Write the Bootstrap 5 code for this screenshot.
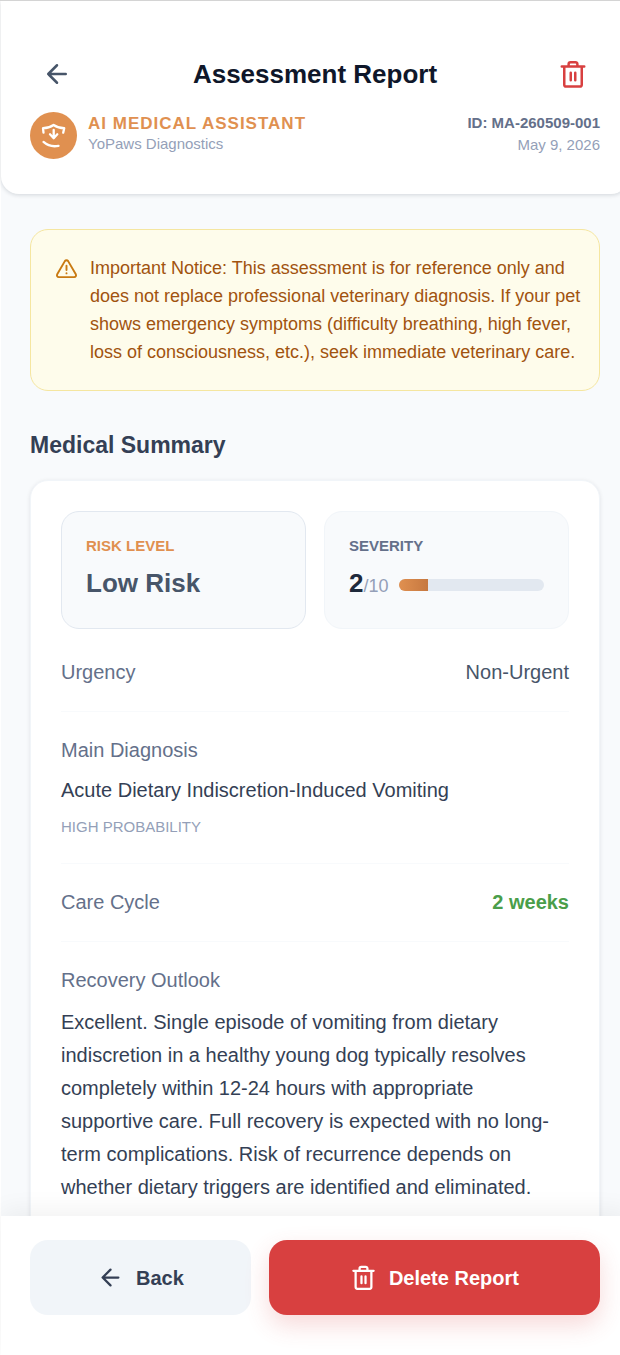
<!DOCTYPE html>
<html lang="en">
<head>
<meta charset="utf-8">
<meta name="viewport" content="width=device-width, initial-scale=1">
<title>Assessment Report</title>
<link href="https://cdn.jsdelivr.net/npm/bootstrap@5.3.0/dist/css/bootstrap.min.css" rel="stylesheet">
<style>
  body { font-family: "Liberation Sans", Arial, sans-serif; background: #fff; color: #343f55; border-top: 1px solid #d4d4d4; overflow: hidden; }
  /* the app frame runs slightly past the right edge of the window */
  .app-frame { margin-left: 1px; margin-right: -9px; background: #f8fafc; }
  .gutter { padding-left: 29px; padding-right: 29px; }
  .app-header { border-radius: 0 0 18px 18px; padding-top: 46px; padding-bottom: 35px; box-shadow: 0 1px 4px rgba(15, 23, 42, .16); z-index: 1; }
  .icon-btn { width: 54px; height: 54px; border: 0; background: none; padding: 0; display: grid; place-items: center; }
  .stroke-icon { fill: none; stroke: currentColor; stroke-width: 2; stroke-linecap: round; stroke-linejoin: round; flex: none; }
  .page-title { font-size: 26px; line-height: 32px; color: #0f172a; }
  .brand-row { margin-top: 11px; }
  .brand-logo { width: 47px; height: 47px; flex: none; }
  .brand-text { margin-left: 11px; padding-top: 2px; }
  .brand-name { font-size: 17px; line-height: 20px; letter-spacing: 1px; }
  .text-brand { color: #e09050; }
  .text-soft { color: #949fb8; }
  .text-slate { color: #64708a; }
  .text-strong { color: #475569; }
  .text-good { color: #4a9e4a; }
  .fine { font-size: 15px; line-height: 20px; }
  .fine-tall { font-size: 15px; line-height: 22px; }
  .app-main { overflow-y: auto; scrollbar-width: none; padding-top: 35px; }
  .app-main::-webkit-scrollbar { display: none; }
  .notice { background: #fefceb; border: 1px solid #f5e6a0; border-radius: 18px; color: #a1530f; padding: 24px 16px 24px 24px; gap: 12px; font-size: 18px; line-height: 28px; }
  .notice svg { color: #c97a12; margin-top: 3px; }
  .section-title { font-size: 23px; line-height: 28px; margin: 40px 0 21px; }
  .summary { background: #fff; border: 1px solid #f1f5f9; border-radius: 18px; padding: 30px; box-shadow: 0 1px 4px rgba(15, 23, 42, .1); }
  .tiles { display: grid; grid-template-columns: 1fr 1fr; gap: 18px; margin-bottom: 5px; }
  .tile { background: #f8fafc; border: 1px solid #f1f5f9; border-radius: 18px; height: 118px; padding: 24px; }
  .tile-risk { border-color: #e2e8f0; }
  .tile-value { margin-top: 11px; gap: 10px; }
  .big { font-size: 26px; line-height: 32px; }
  .severity-num { color: #1e293b; }
  .severity-max { font-size: 18px; }
  .severity-bar { height: 12px; border-radius: 6px; background: #e2e8f0; }
  .severity-bar .progress-bar { background: linear-gradient(90deg, #e09050, #c67840); }
  .item { border-bottom: 1px solid #f8fafc; padding: 24px 0 25px; font-size: 20px; line-height: 28px; }
  .item:last-child { border-bottom: 0; }
  .item > * + .below { margin-top: 12px; }
  .outlook { line-height: 33px; margin-bottom: 0; }
  .app-footer { background: #fff; padding-top: 24px; padding-bottom: 41px; display: grid; grid-template-columns: 2fr 3fr; gap: 18px; box-shadow: 0 -5px 24px rgba(0, 0, 0, .06); z-index: 1; }
  .action { height: 75px; border: 0; border-radius: 18px; font-size: 20px; font-weight: 700; gap: 12px; }
  .action-back { background: #f1f5f9; color: #343f55; }
  .action-delete { background: #d84040; color: #fff; box-shadow: 0 10px 24px rgba(216, 64, 64, .2); }
  .text-delete { color: #d84040; }
</style>
</head>
<body>
<svg class="d-none">
  <symbol id="arrow" viewBox="0 0 24 24"><path d="M19 12H5M12 19l-7-7 7-7"/></symbol>
  <symbol id="trash" viewBox="0 0 24 24"><path d="M3 6h18M19 6v14.500a1.500 1.500 0 0 1-1.500 1.500h-11a1.500 1.500 0 0 1-1.500-1.500V6M8.500 6V4a1.500 1.500 0 0 1 1.500-1.500h4a1.500 1.500 0 0 1 1.500 1.500v2M10.200 11v6M13.800 11v6"/></symbol>
</svg>
<div class="app-frame vh-100 d-flex flex-column">
  <header class="app-header gutter bg-white position-relative">
    <div class="d-flex justify-content-between align-items-center">
      <button class="icon-btn text-strong" type="button" aria-label="Back"><svg class="stroke-icon" width="30" height="30"><use href="#arrow"/></svg></button>
      <h1 class="page-title fw-bold m-0">Assessment Report</h1>
      <button class="icon-btn text-delete" type="button" aria-label="Delete"><svg class="stroke-icon" width="30" height="30"><use href="#trash"/></svg></button>
    </div>
    <div class="brand-row d-flex justify-content-between">
      <div class="d-flex">
        <svg class="brand-logo stroke-icon" viewBox="0 0 47 47" aria-hidden="true">
          <circle cx="23.500" cy="23.500" r="23.500" fill="#e09050" stroke="none"/>
          <path stroke="#fff" stroke-width="2.300" d="M13.500 20.700 13 16.200q6 0 10.600-3.200 4.600 3.200 10.600 3.200L33.200 20.700M23.700 18v8M20 22.300l3.700 3.900 3.600-3.900M13.500 29.900Q20 35.600 28.500 33.800"/>
        </svg>
        <div class="brand-text">
          <div class="brand-name text-brand fw-bold">AI MEDICAL ASSISTANT</div>
          <div class="fine text-soft">YoPaws Diagnostics</div>
        </div>
      </div>
      <div class="text-end">
        <div class="fine-tall text-slate fw-bold">ID: MA-260509-001</div>
        <div class="fine-tall text-soft">May 9, 2026</div>
      </div>
    </div>
  </header>

  <main class="app-main gutter flex-grow-1">
    <div class="notice d-flex" role="note">
      <svg class="stroke-icon" width="23" height="23" viewBox="0 0 24 24"><path d="M10.300 4.300 2.300 18a2 2 0 0 0 1.700 3h16a2 2 0 0 0 1.700-3L13.700 4.300a2 2 0 0 0-3.400 0zM12 9v4.500M12 17v.1"/></svg>
      <p class="m-0">Important Notice: This assessment is for reference only and does not replace professional veterinary diagnosis. If your pet shows emergency symptoms (difficulty breathing, high fever, loss of consciousness, etc.), seek immediate veterinary care.</p>
    </div>
    <h2 class="section-title fw-bold">Medical Summary</h2>
    <section class="summary">
      <div class="tiles">
        <div class="tile tile-risk">
          <div class="fine text-brand fw-bold">RISK LEVEL</div>
          <div class="tile-value big text-strong fw-bold">Low Risk</div>
        </div>
        <div class="tile">
          <div class="fine text-slate fw-bold">SEVERITY</div>
          <div class="tile-value d-flex align-items-center">
            <div class="big"><b class="severity-num">2</b><span class="severity-max text-soft">/10</span></div>
            <div class="progress severity-bar flex-grow-1" role="progressbar" aria-label="Severity" aria-valuenow="2" aria-valuemin="0" aria-valuemax="10"><div class="progress-bar" style="width: 20%"></div></div>
          </div>
        </div>
      </div>
      <div class="item d-flex justify-content-between"><span class="text-slate">Urgency</span><span class="text-strong">Non-Urgent</span></div>
      <div class="item">
        <div class="text-slate">Main Diagnosis</div>
        <div class="below">Acute Dietary Indiscretion-Induced Vomiting</div>
        <div class="fine-tall text-soft below">HIGH PROBABILITY</div>
      </div>
      <div class="item d-flex justify-content-between"><span class="text-slate">Care Cycle</span><span class="text-good fw-bold">2 weeks</span></div>
      <div class="item">
        <div class="text-slate">Recovery Outlook</div>
        <p class="outlook below">Excellent. Single episode of vomiting from dietary indiscretion in a healthy young dog typically resolves completely within 12-24 hours with appropriate supportive care. Full recovery is expected with no long-term complications. Risk of recurrence depends on whether dietary triggers are identified and eliminated.</p>
      </div>
    </section>
  </main>

  <footer class="app-footer gutter position-relative">
    <button class="action action-back d-flex align-items-center justify-content-center" type="button"><svg class="stroke-icon" width="27" height="27"><use href="#arrow"/></svg>Back</button>
    <button class="action action-delete d-flex align-items-center justify-content-center" type="button"><svg class="stroke-icon" width="27" height="27"><use href="#trash"/></svg>Delete Report</button>
  </footer>
</div>
<script src="https://cdn.jsdelivr.net/npm/bootstrap@5.3.0/dist/js/bootstrap.bundle.min.js"></script>
</body>
</html>
